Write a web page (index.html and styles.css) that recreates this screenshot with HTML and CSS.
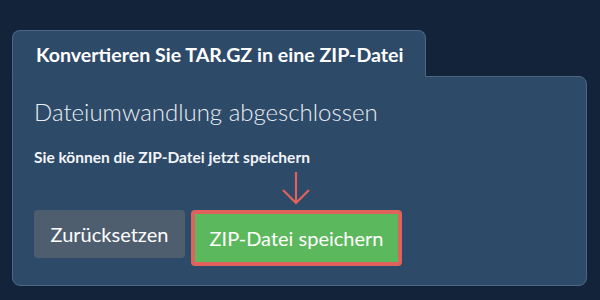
FILE: index.html
```html
<!DOCTYPE html>
<html>
  <head>
    <meta name="viewport" content="width=device-width, initial-scale=1">
    <link rel="stylesheet" href="styles.css">
  </head>
  <body>
    <div class="box">
      <div class="tab">Konvertieren Sie TAR.GZ in eine ZIP-Datei</div>
      <div class="panel">
        <h2>Dateiumwandlung abgeschlossen</h2>
        <p class="note">Sie können die ZIP-Datei jetzt speichern</p>
        <div class="actions">
          <button class="btn reset">Zurücksetzen</button>
          <div class="save-wrap">
            <svg class="arrow" width="30" height="34" viewBox="0 0 30 34">
              <path d="M15 1 V32 M2 19 L15 32 L28 19" fill="none" stroke="#e0625c" stroke-width="2.2"/>
            </svg>
            <button class="btn save">ZIP-Datei speichern</button>
          </div>
        </div>
      </div>
    </div>
  </body>
</html>
```

FILE: styles.css
```css
body { margin: 0; background-color: #12233a; font-family: Lato, "Open Sans", sans-serif; color: white }
.box { padding: 30px 13px 14px 12px }
.tab { display: inline-block; position: relative; z-index: 1; background: #2e4a69; border: 1px solid #4b6784; border-bottom: 1px solid #2e4a69; border-radius: 8px 8px 0 0; margin-bottom: -1px; padding: 12px 21px 9px 23px; font-size: 19.6px; font-weight: bold; line-height: 24px; white-space: nowrap }
.panel { background: #2e4a69; border: 1px solid #4b6784; border-radius: 0 8px 8px 8px; padding: 20px 20px 19px 21px }
h2 { margin: 0; font-size: 24px; font-weight: 300; line-height: 29px; color: #eaeef3 }
.note { margin: 23px 0 0 0; font-size: 15.5px; font-weight: bold; line-height: 17px; color: #f2f4f7 }
.actions { display: flex; align-items: flex-start; gap: 6px; margin-top: 44px }
.btn { font-family: inherit; font-size: 20px; color: white; border: none; cursor: pointer }
.reset { background: #4e5e6f; border-radius: 4px; width: 151px; height: 48px; padding: 0 }
.save-wrap { position: relative }
.arrow { position: absolute; left: 90px; top: -39px }
.save { background: #5cb85c; border: 4px solid #e0625c; border-radius: 4px; width: 211px; height: 56px; padding: 0 }
```
